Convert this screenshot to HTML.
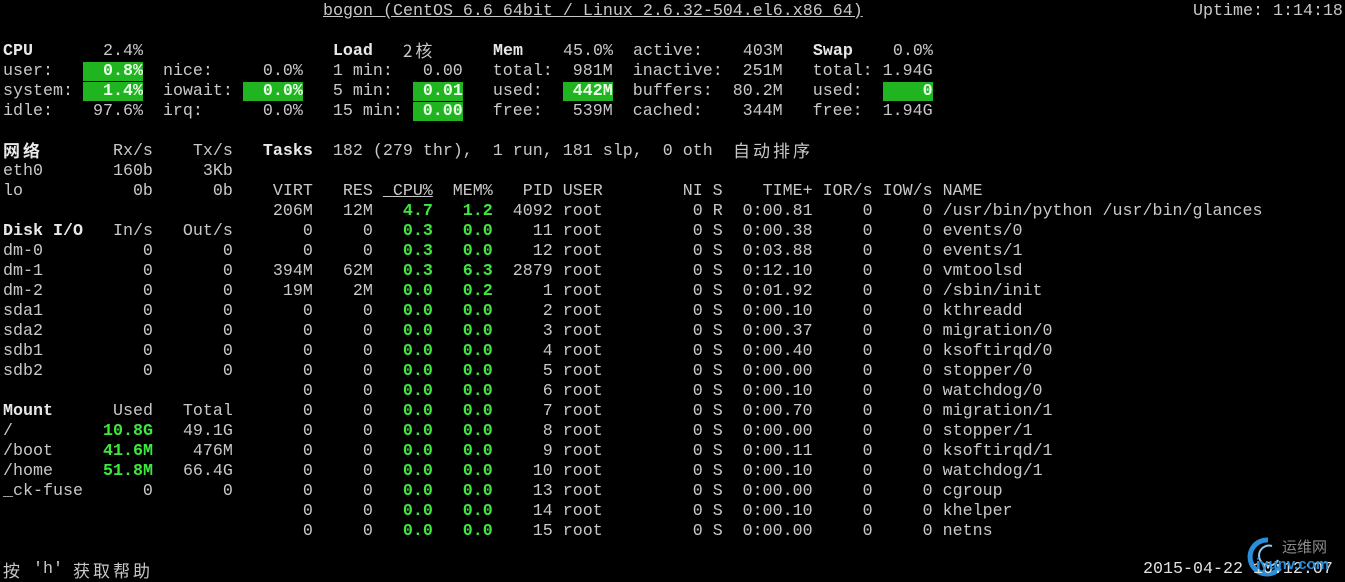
<!DOCTYPE html>
<html><head><meta charset="utf-8"><style>
html,body{margin:0;padding:0;background:#000;width:1345px;height:581px;overflow:hidden}
#w{position:absolute;left:0;top:2px;width:1345px;height:579px}
.r{position:absolute;left:3px;white-space:pre;font-family:"Liberation Mono",monospace;font-size:16.67px;line-height:20px;height:20px;color:#c8c8c8}
b{font-weight:bold;color:#e8e8e8}
.g{color:#3ee83e;font-weight:bold}
.h{background:#20b420;color:#eaffea;font-weight:bold}
.c{position:absolute;font-family:"Noto Sans CJK SC","WenQuanYi Zen Hei",sans-serif;font-size:17px;letter-spacing:3px;line-height:20px;white-space:pre;color:#c8c8c8;margin-top:-2px}
.u{text-decoration:underline}
</style></head><body><div id="w">
<div class="r" style="top:0"><span style="position:absolute;left:320px" class="u">bogon (CentOS 6.6 64bit / Linux 2.6.32-504.el6.x86_64)</span><span style="position:absolute;left:1190px">Uptime: 1:14:18</span></div>
<div class="r" style="top:40px"><b>CPU</b>       2.4%                   <b>Load</b></div>
<div class="c" style="top:40px;left:403px">2核</div>
<div class="r" style="top:40px;left:493px"><b>Mem</b>    45.0%  active:    403M   <b>Swap</b>    0.0%</div>
<div class="r" style="top:60px">user:   <span class="h">  0.8%</span>  nice:     0.0%   1 min:   0.00   total:  981M  inactive:  251M   total: 1.94G</div>
<div class="r" style="top:80px">system: <span class="h">  1.4%</span>  iowait: <span class="h">  0.0%</span>   5 min:  <span class="h"> 0.01</span>   used:  <span class="h"> 442M</span>  buffers:  80.2M   used:  <span class="h">    0</span></div>
<div class="r" style="top:100px">idle:    97.6%  irq:      0.0%   15 min: <span class="h"> 0.00</span>   free:   539M  cached:    344M   free:  1.94G</div>
<div class="c" style="top:140px;left:3px;font-weight:bold;color:#e8e8e8">网络</div>
<div class="r" style="top:140px">           Rx/s    Tx/s   <b>Tasks</b>  182 (279 thr),  1 run, 181 slp,  0 oth</div>
<div class="c" style="top:140px;left:733px">自动排序</div>
<div class="r" style="top:160px">eth0       160b     3Kb</div>
<div class="r" style="top:180px">lo           0b      0b    VIRT   RES <span class="u"> CPU%</span>  MEM%   PID USER        NI S    TIME+ IOR/s IOW/s NAME</div>
<div class="r" style="top:200px">                           206M   12M<span class="g">   4.7   1.2</span>  4092 root         0 R  0:00.81     0     0 /usr/bin/python /usr/bin/glances</div>
<div class="r" style="top:220px"><b>Disk I/O</b>   In/s   Out/s       0     0<span class="g">   0.3   0.0</span>    11 root         0 S  0:00.38     0     0 events/0</div>
<div class="r" style="top:240px">dm-0          0       0       0     0<span class="g">   0.3   0.0</span>    12 root         0 S  0:03.88     0     0 events/1</div>
<div class="r" style="top:260px">dm-1          0       0    394M   62M<span class="g">   0.3   6.3</span>  2879 root         0 S  0:12.10     0     0 vmtoolsd</div>
<div class="r" style="top:280px">dm-2          0       0     19M    2M<span class="g">   0.0   0.2</span>     1 root         0 S  0:01.92     0     0 /sbin/init</div>
<div class="r" style="top:300px">sda1          0       0       0     0<span class="g">   0.0   0.0</span>     2 root         0 S  0:00.10     0     0 kthreadd</div>
<div class="r" style="top:320px">sda2          0       0       0     0<span class="g">   0.0   0.0</span>     3 root         0 S  0:00.37     0     0 migration/0</div>
<div class="r" style="top:340px">sdb1          0       0       0     0<span class="g">   0.0   0.0</span>     4 root         0 S  0:00.40     0     0 ksoftirqd/0</div>
<div class="r" style="top:360px">sdb2          0       0       0     0<span class="g">   0.0   0.0</span>     5 root         0 S  0:00.00     0     0 stopper/0</div>
<div class="r" style="top:380px">                              0     0<span class="g">   0.0   0.0</span>     6 root         0 S  0:00.10     0     0 watchdog/0</div>
<div class="r" style="top:400px"><b>Mount</b>      Used   Total       0     0<span class="g">   0.0   0.0</span>     7 root         0 S  0:00.70     0     0 migration/1</div>
<div class="r" style="top:420px">/         <span class="g">10.8G</span>   49.1G       0     0<span class="g">   0.0   0.0</span>     8 root         0 S  0:00.00     0     0 stopper/1</div>
<div class="r" style="top:440px">/boot     <span class="g">41.6M</span>    476M       0     0<span class="g">   0.0   0.0</span>     9 root         0 S  0:00.11     0     0 ksoftirqd/1</div>
<div class="r" style="top:460px">/home     <span class="g">51.8M</span>   66.4G       0     0<span class="g">   0.0   0.0</span>    10 root         0 S  0:00.10     0     0 watchdog/1</div>
<div class="r" style="top:480px">_ck-fuse      0       0       0     0<span class="g">   0.0   0.0</span>    13 root         0 S  0:00.00     0     0 cgroup</div>
<div class="r" style="top:500px">                              0     0<span class="g">   0.0   0.0</span>    14 root         0 S  0:00.10     0     0 khelper</div>
<div class="r" style="top:520px">                              0     0<span class="g">   0.0   0.0</span>    15 root         0 S  0:00.00     0     0 netns</div>
<div class="c" style="top:560px;left:3px">按</div>
<div class="r" style="top:558px;left:33px">'h'</div>
<div class="c" style="top:560px;left:73px">获取帮助</div>
<svg style="position:absolute;left:1238px;top:528px" width="50" height="50"><path d="M30 10 A17 17 0 1 0 42 38" stroke="#2a8fd8" stroke-width="5" fill="none"/><path d="M34 16 A10 10 0 1 0 40 30" stroke="#8cc8f0" stroke-width="2" fill="none"/></svg>
<div class="c" style="top:537px;left:1282px;color:#8a8a8a;font-size:15px;letter-spacing:0">运维网</div>
<div class="r" style="top:558px;left:1143px;color:#e0e0e0">2015-04-22 10:12:07</div>
<div style="position:absolute;top:554px;left:1256px;font-family:'Liberation Sans',sans-serif;font-weight:bold;font-size:15px;color:#2a8fd8">iyunv.com</div>
</div></body></html>
